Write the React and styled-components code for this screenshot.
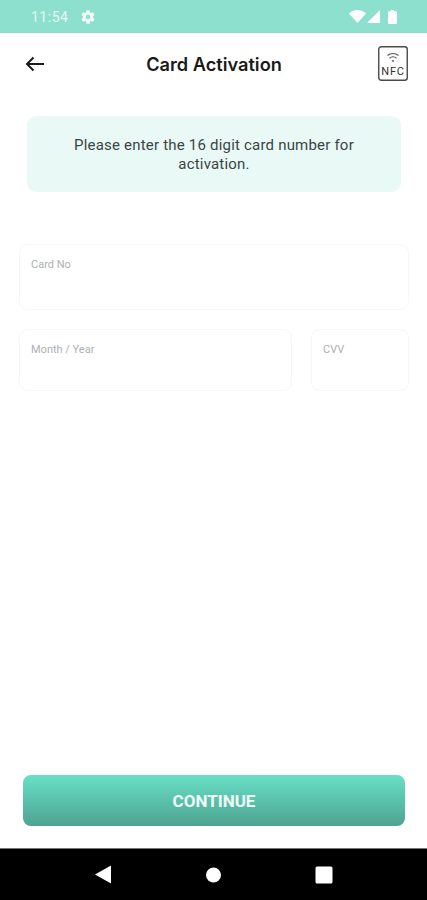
import React from "react";
import styled, { createGlobalStyle } from "styled-components";

const Global = createGlobalStyle`
  html, body { margin: 0; padding: 0; background: #fff; }
  body { font-family: Roboto, "Liberation Sans", sans-serif; }
  * { box-sizing: border-box; }
`;

const Page = styled.div`
  width: 427px;
  height: 900px;
  display: flex;
  flex-direction: column;
  overflow: hidden;
  background: #fff;
`;

const StatusBar = styled.div`
  height: 33px;
  flex: none;
  background: #8de0cd;
  display: flex;
  align-items: center;
  justify-content: space-between;
  padding: 0 30px 0 31px;
`;

const StatusLeft = styled.div`
  display: flex;
  align-items: center;
  gap: 12px;
`;

const StatusRight = styled.div`
  display: flex;
  align-items: center;
  gap: 1px;
`;

const Time = styled.span`
  color: #e9f9f5;
  font-size: 14px;
  letter-spacing: 0.5px;
  line-height: 18px;
`;

const Header = styled.header`
  height: 62px;
  flex: none;
  display: flex;
  align-items: center;
  justify-content: space-between;
  padding: 0 19px 0 25px;
`;

const Title = styled.h1`
  margin: 0 0 0 5px;
  font-family: Inter, Roboto, sans-serif;
  font-size: 18.2px;
  font-weight: 600;
  color: #1a1a1a;
`;

const Main = styled.main`
  flex: 1;
  display: flex;
  flex-direction: column;
  padding: 21px 18px 22px 19px;
`;

const Notice = styled.div`
  margin: 0 8px 52px;
  height: 76px;
  border-radius: 9px;
  background: #e8f9f6;
  color: #3c4544;
  font-size: 15px;
  line-height: 19px;
  letter-spacing: 0.2px;
  text-align: center;
  display: flex;
  align-items: center;
  justify-content: center;
  padding: 1px 40px 0;
`;

const Form = styled.div`
  display: flex;
  flex-direction: column;
  gap: 19px;
`;

const FieldRow = styled.div`
  display: flex;
  gap: 19px;
`;

const Field = styled.div`
  height: ${(p) => p.$height}px;
  flex: ${(p) => p.$flex};
  border: 1px solid #f7f7f7;
  border-radius: 9px;
  padding: 13px 11px;
  color: #aeb1b1;
  font-size: 11px;
  line-height: 14px;
  min-width: 0;
`;

const Spacer = styled.div`
  flex: 1;
`;

const Button = styled.button`
  height: 51px;
  margin: 0 4px;
  border: none;
  border-radius: 8px;
  background: linear-gradient(180deg, #68e0c5 0%, #4da392 100%);
  color: #f1fbf8;
  font-family: Roboto, sans-serif;
  font-size: 17px;
  font-weight: 700;
  display: flex;
  align-items: center;
  justify-content: center;
`;

const NavBar = styled.nav`
  height: 52px;
  flex: none;
  background: #000;
  border-top: 1px solid #777;
  display: grid;
  grid-template-columns: 16px 16px 18px;
  column-gap: 94px;
  align-items: center;
  justify-content: center;
  padding-left: 1px;
`;

const NavHomeSlot = styled.span`
  display: flex;
  margin-left: 1px;
`;

const Gear = () => (
  <svg width="16" height="16" viewBox="0 0 24 24" fill="#f0fbf8">
    <path d="M19.4 13c.04-.33.1-.66.1-1s-.06-.67-.1-1l2.1-1.65c.2-.15.25-.42.13-.64l-2-3.46c-.12-.22-.4-.3-.6-.22l-2.5 1c-.52-.4-1.08-.73-1.7-.98l-.37-2.65A.5.5 0 0 0 14 2h-4a.5.5 0 0 0-.5.42l-.37 2.65c-.62.25-1.18.59-1.7.98l-2.5-1a.5.5 0 0 0-.6.22l-2 3.46c-.13.22-.07.49.12.64L4.6 11c-.04.33-.1.66-.1 1s.06.67.1 1l-2.1 1.65c-.2.15-.25.42-.13.64l2 3.46c.12.22.4.3.6.22l2.5-1c.52.4 1.08.73 1.7.98l.37 2.65c.04.24.25.42.5.42h4c.25 0 .46-.18.5-.42l.37-2.65c.62-.25 1.18-.59 1.7-.98l2.5 1c.23.08.49 0 .6-.22l2-3.46c.13-.22.07-.49-.12-.64L19.4 13zM12 15.5a3.5 3.5 0 1 1 0-7 3.5 3.5 0 0 1 0 7z" />
  </svg>
);

const Wifi = () => (
  <svg width="17" height="13" viewBox="0 0 17 13" fill="#fff">
    <path d="M0 3.6C2.1 1.4 5.2 0 8.5 0s6.4 1.4 8.5 3.6L8.5 13 0 3.6z" />
  </svg>
);

const Signal = () => (
  <svg width="13" height="13" viewBox="0 0 13 13" fill="#fff">
    <path d="M13 0v13H0L13 0z" />
  </svg>
);

const Battery = () => (
  <svg width="9" height="14" viewBox="0 0 9 14" fill="#fff" style={{ marginLeft: 7 }}>
    <path d="M3 0h3v1.2h1.6c.8 0 1.4.6 1.4 1.3v10.2c0 .7-.6 1.3-1.4 1.3H1.4C.6 14 0 13.4 0 12.7V2.5c0-.7.6-1.3 1.4-1.3H3V0z" />
  </svg>
);

const BackArrow = () => (
  <svg width="20" height="16" viewBox="0 0 20 16" fill="none" stroke="#1a1a1a" strokeWidth="2" style={{ marginTop: -1 }}>
    <path d="M19 8H2M8.5 1.5 2 8l6.5 6.5" />
  </svg>
);

const NfcIcon = () => (
  <svg width="30" height="36" viewBox="0 0 30 36" fill="none" style={{ marginTop: -1 }}>
    <rect x="0.75" y="0.75" width="28.5" height="33.5" rx="2.5" stroke="#4a4a4a" strokeWidth="1.4" />
    <path d="M9.5 9.5c3-2.6 8-2.6 11 0M11.5 12.2c2-1.6 5-1.6 7 0" stroke="#555" strokeWidth="1.1" />
    <path d="M13.7 14.8c.8-.6 1.8-.6 2.6 0L15 16.3z" fill="#555" />
    <text x="15" y="29" textAnchor="middle" fontFamily="Roboto, sans-serif" fontSize="11" fontWeight="400" fill="#333" letterSpacing="0.8">NFC</text>
  </svg>
);

const NavBack = () => (
  <svg width="16" height="19" viewBox="0 0 16 19" fill="#fff">
    <path d="M16 0.5v18L0 9.5z" />
  </svg>
);

const NavHome = () => (
  <svg width="16" height="16" viewBox="0 0 16 16" fill="#fff">
    <circle cx="8" cy="8" r="8" />
  </svg>
);

const NavRecent = () => (
  <svg width="18" height="18" viewBox="0 0 18 18" fill="#fff">
    <rect x="0.5" y="0.5" width="17" height="17" rx="1.5" />
  </svg>
);

export default function App() {
  return (
    <Page>
      <Global />
      <StatusBar>
        <StatusLeft>
          <Time>11:54</Time>
          <Gear />
        </StatusLeft>
        <StatusRight>
          <Wifi />
          <Signal />
          <Battery />
        </StatusRight>
      </StatusBar>
      <Header>
        <BackArrow />
        <Title>Card Activation</Title>
        <NfcIcon />
      </Header>
      <Main>
        <Notice>Please enter the 16 digit card number for activation.</Notice>
        <Form>
          <Field $height={66}>Card No</Field>
          <FieldRow>
            <Field $height={62} $flex="0 0 273px">Month / Year</Field>
            <Field $height={62} $flex="1">CVV</Field>
          </FieldRow>
        </Form>
        <Spacer />
        <Button>CONTINUE</Button>
      </Main>
      <NavBar>
        <NavBack />
        <NavHomeSlot>
          <NavHome />
        </NavHomeSlot>
        <NavRecent />
      </NavBar>
    </Page>
  );
}
